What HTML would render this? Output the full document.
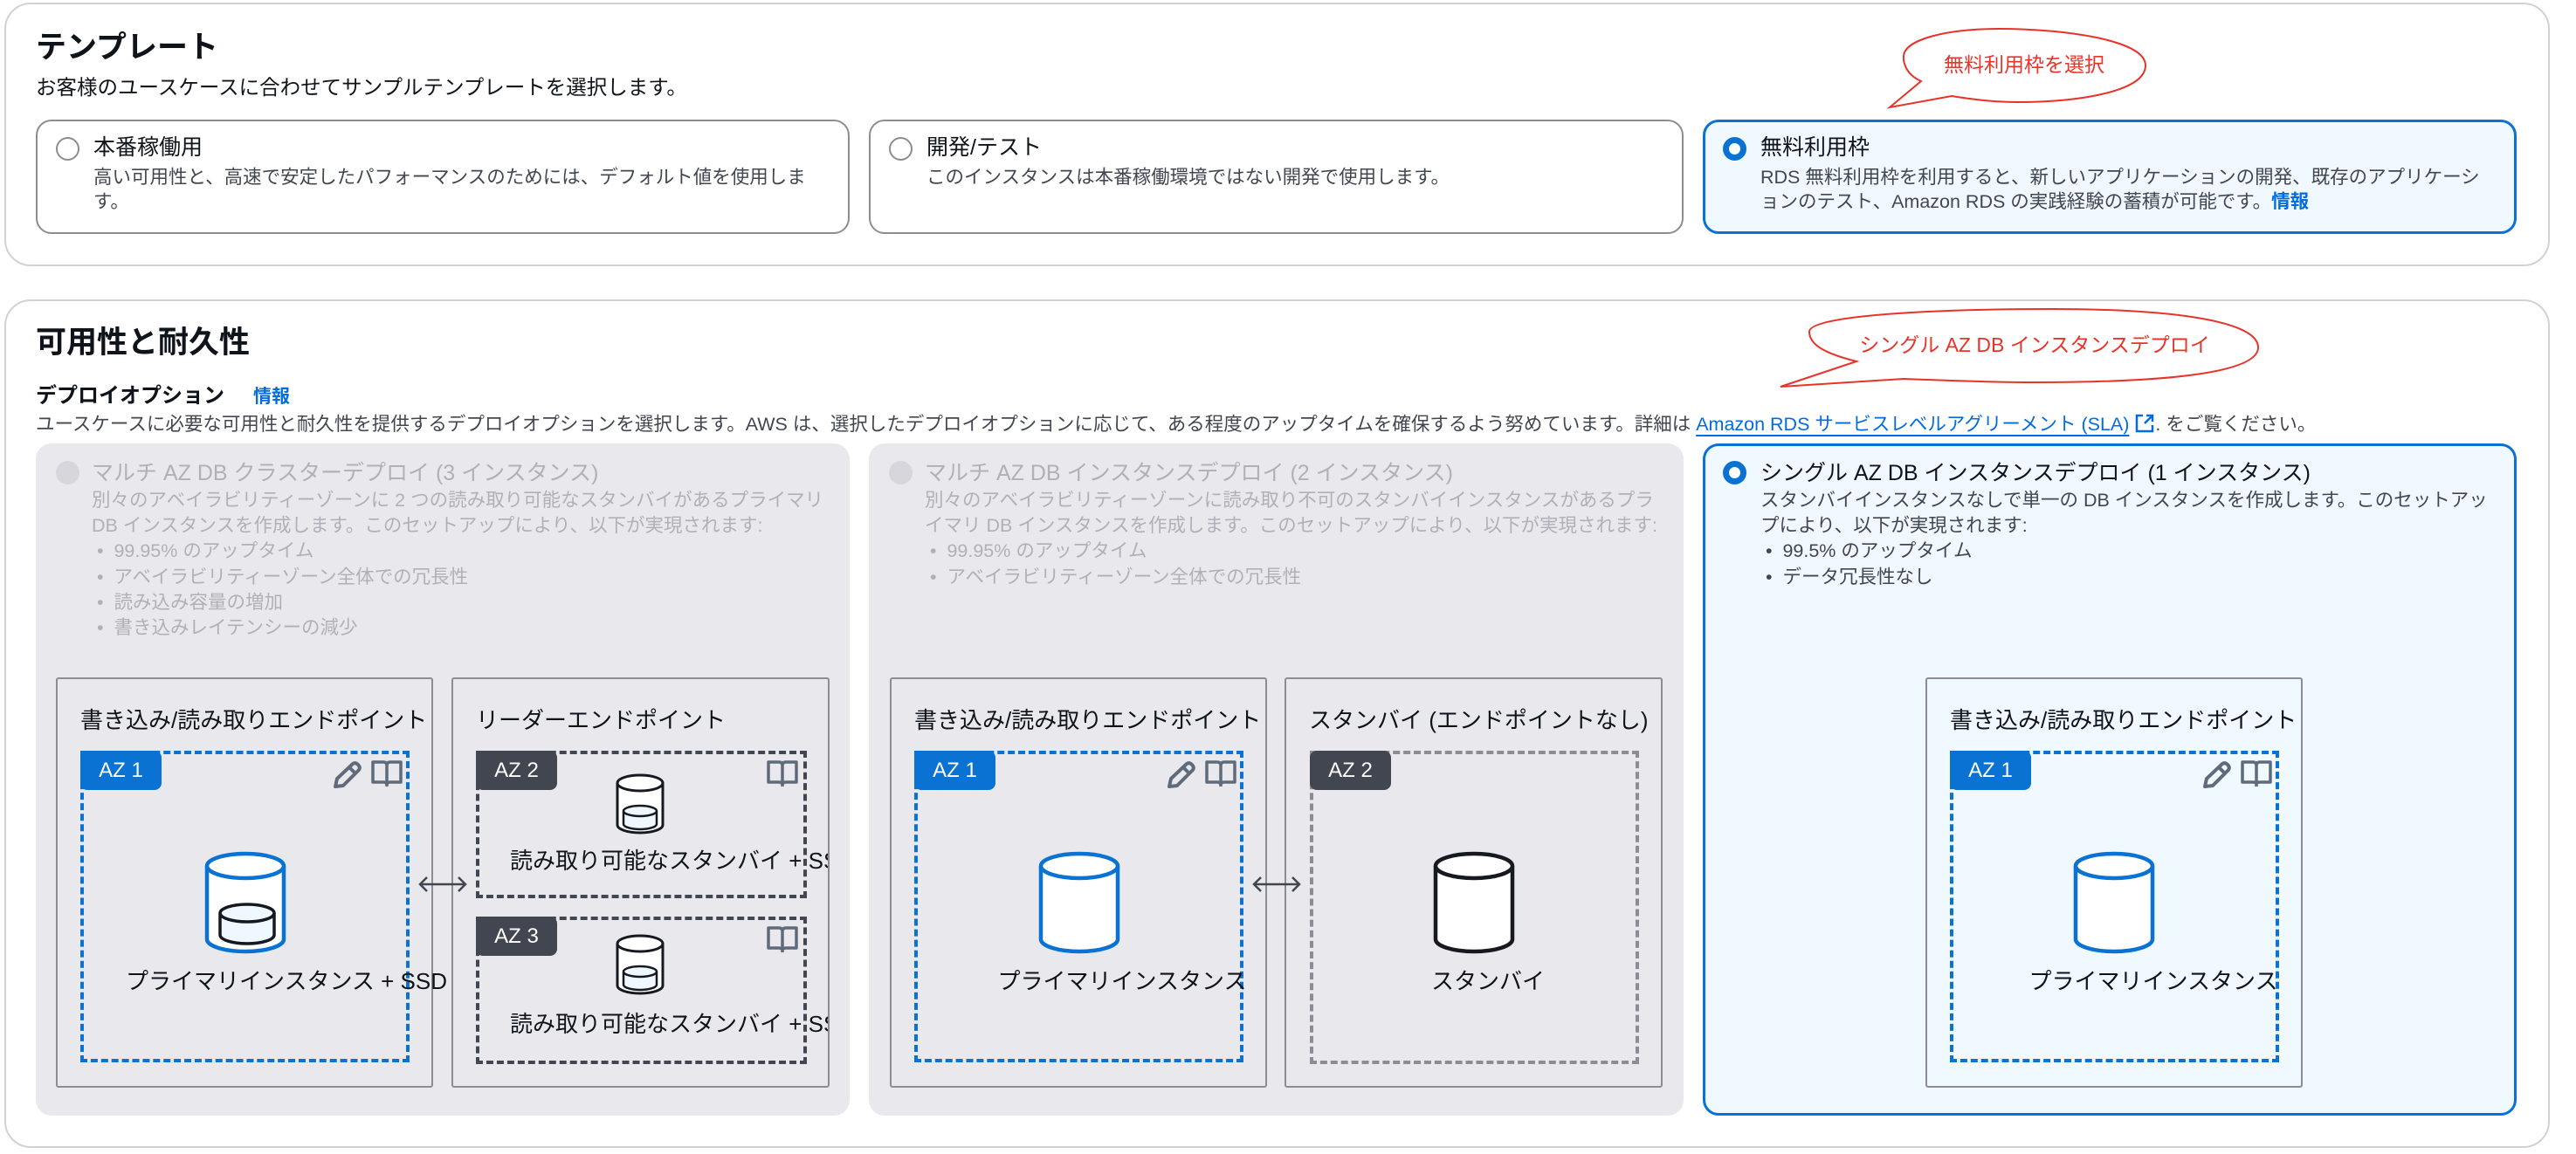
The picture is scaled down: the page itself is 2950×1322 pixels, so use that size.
<!DOCTYPE html>
<html><head><meta charset="utf-8"><style>
*{margin:0;padding:0;box-sizing:border-box}
body{width:2950px;height:1322px;background:#fff;position:relative;overflow:hidden;font-family:"Liberation Sans","Noto Sans CJK JP",sans-serif;color:#0f141a}
.a{position:absolute;white-space:nowrap}
.card{position:absolute;left:5px;width:2915px;border:2px solid #d1d1d8;border-radius:30px;background:#fff}
.opt{position:absolute;border:2px solid #8c8c94;border-radius:18px;background:#fff}
.sel{border:3px solid #0972d3;background:#f0f9ff}
.dis{border:none;background:#e9e9ed}
.radio{position:absolute;width:27px;height:27px;border-radius:50%;border:2px solid #8c8c94;background:#fff}
.radio.on{border:7px solid #0972d3}
.radio.off{border:none;background:#d6d6dc}
.t{font-size:25px;line-height:30px}
.d{font-size:21.5px;line-height:28px;color:#424650}
.g{color:#b0b0b8}
.box{position:absolute;border:2px solid #8c8c94;border-radius:3px;overflow:hidden}
.ep{position:absolute;font-size:26px;line-height:30px;top:32px;left:26px;white-space:nowrap}
.dash{position:absolute;border:4px dashed #0972d3}
.badge{position:absolute;left:-4px;top:-4px;width:93px;height:45px;border-radius:8px;background:#0972d3;color:#fff;font-size:24px;line-height:45px;text-align:center}
.lbl{position:absolute;font-size:26px;line-height:30px;white-space:nowrap;transform:translateX(-50%)}
.link{color:#006ce0}
</style></head><body>

<!-- Template card -->
<div class="card" style="top:3px;height:302px"></div>
<div class="a" style="left:41px;top:34px;font-size:35px;line-height:42px;font-weight:bold">テンプレート</div>
<div class="a" style="left:41px;top:86px;font-size:23.5px;line-height:28px">お客様のユースケースに合わせてサンプルテンプレートを選択します。</div>

<div class="opt" style="left:41px;top:137px;width:932px;height:131px">
 <div class="radio" style="left:21px;top:18px"></div>
 <div class="a t" style="left:64px;top:15px">本番稼働用</div>
 <div class="a d" style="left:64px;top:50px;color:#424650">高い可用性と、高速で安定したパフォーマンスのためには、デフォルト値を使用しま<br>す。</div>
</div>
<div class="opt" style="left:995px;top:137px;width:933px;height:131px">
 <div class="radio" style="left:21px;top:18px"></div>
 <div class="a t" style="left:64px;top:15px">開発/テスト</div>
 <div class="a d" style="left:64px;top:50px">このインスタンスは本番稼働環境ではない開発で使用します。</div>
</div>
<div class="opt sel" style="left:1950px;top:137px;width:932px;height:131px">
 <div class="radio on" style="left:20px;top:17px"></div>
 <div class="a t" style="left:63px;top:14px">無料利用枠</div>
 <div class="a d" style="left:63px;top:49px">RDS 無料利用枠を利用すると、新しいアプリケーションの開発、既存のアプリケーシ<br>ョンのテスト、Amazon RDS の実践経験の蓄積が可能です。<b class="link">情報</b></div>
</div>

<!-- balloon 1 -->
<svg class="a" style="left:2150px;top:25px" width="320" height="105" viewBox="0 0 320 105">
<path d="M14 98 L50 68 C28 58 30 40 30 40 C30 20 80 8 140 8 C210 8 307 20 307 50 C307 80 230 92 160 92 C130 92 105 88 85 85 Z" fill="#fff" stroke="#e8332a" stroke-width="2"/>
<text x="168" y="57" font-size="23" fill="#e8332a" text-anchor="middle" font-family="Liberation Sans, Noto Sans CJK JP, sans-serif">無料利用枠を選択</text>
</svg>

<!-- Availability card -->
<div class="card" style="top:343px;height:972px"></div>
<div class="a" style="left:41px;top:372px;font-size:35px;line-height:42px;font-weight:bold">可用性と耐久性</div>
<div class="a" style="left:41px;top:439px;font-size:24px;line-height:30px;font-weight:bold">デプロイオプション</div>
<div class="a link" style="left:290px;top:441px;font-size:21px;line-height:28px;font-weight:bold">情報</div>
<div class="a" style="left:41px;top:472px;font-size:21.5px;line-height:28px;color:#424650">ユースケースに必要な可用性と耐久性を提供するデプロイオプションを選択します。AWS は、選択したデプロイオプションに応じて、ある程度のアップタイムを確保するよう努めています。詳細は <span class="link" style="text-decoration:underline;text-underline-offset:5px;text-decoration-thickness:2px">Amazon RDS サービスレベルアグリーメント (SLA)</span> <svg width="24" height="24" viewBox="0 0 24 24" style="vertical-align:-4px"><path d="M10 3H3v18h18v-7M14 3h7v7M21 3l-9 9" fill="none" stroke="#006ce0" stroke-width="2.5"/></svg>. をご覧ください。</div>

<!-- balloon 2 -->
<svg class="a" style="left:2030px;top:350px" width="565" height="100" viewBox="0 0 565 100">
<path d="M9 93 L96 64 C60 55 42 45 42 30 C42 10 200 4 320 4 C460 4 556 18 556 48 C556 80 430 88 300 88 C250 88 200 86 150 84 Z" fill="#fff" stroke="#e8332a" stroke-width="2"/>
<text x="300" y="53" font-size="23" fill="#e8332a" text-anchor="middle" font-family="Liberation Sans, Noto Sans CJK JP, sans-serif">シングル AZ DB インスタンスデプロイ</text>
</svg>

<!-- Panel 1 -->
<div class="opt dis" style="left:41px;top:508px;width:932px;height:770px">
 <div class="radio off" style="left:23px;top:20px"></div>
 <div class="a t g" style="left:64px;top:19px">マルチ AZ DB クラスターデプロイ (3 インスタンス)</div>
 <div class="a d g" style="left:64px;top:51px;line-height:29.2px">別々のアベイラビリティーゾーンに 2 つの読み取り可能なスタンバイがあるプライマリ<br>DB インスタンスを作成します。このセットアップにより、以下が実現されます:<br>&nbsp;• &nbsp;99.95% のアップタイム<br>&nbsp;• &nbsp;アベイラビリティーゾーン全体での冗長性<br>&nbsp;• &nbsp;読み込み容量の増加<br>&nbsp;• &nbsp;書き込みレイテンシーの減少</div>
</div>
<div class="box" style="left:64px;top:776px;width:432px;height:470px;overflow:visible">
 <div class="ep">書き込み/読み取りエンドポイント</div>
</div>
<div class="box" style="left:517px;top:776px;width:433px;height:470px;background:transparent">
 <div class="ep">リーダーエンドポイント</div>
 <div class="dash" style="left:26px;top:82px;width:379px;height:169px;border-color:#424650"><div class="badge" style="background:#424650">AZ 2</div></div>
 <div class="lbl" style="left:216px;top:193px;transform:none;left:65px">読み取り可能なスタンバイ + SSD</div>
 <div class="dash" style="left:26px;top:272px;width:379px;height:169px;border-color:#424650"><div class="badge" style="background:#424650">AZ 3</div></div>
 <div class="lbl" style="left:65px;top:380px;transform:none">読み取り可能なスタンバイ + SSD</div>
</div>
<div class="dash" style="left:92px;top:860px;width:377px;height:357px"><div class="badge">AZ 1</div></div>
<div class="lbl" style="left:328px;top:1109px">プライマリインスタンス + SSD</div>

<!-- Panel 2 -->
<div class="opt dis" style="left:995px;top:508px;width:933px;height:770px">
 <div class="radio off" style="left:23px;top:20px"></div>
 <div class="a t g" style="left:64px;top:19px">マルチ AZ DB インスタンスデプロイ (2 インスタンス)</div>
 <div class="a d g" style="left:64px;top:51px;line-height:29.2px">別々のアベイラビリティーゾーンに読み取り不可のスタンバイインスタンスがあるプラ<br>イマリ DB インスタンスを作成します。このセットアップにより、以下が実現されます:<br>&nbsp;• &nbsp;99.95% のアップタイム<br>&nbsp;• &nbsp;アベイラビリティーゾーン全体での冗長性</div>
</div>
<div class="box" style="left:1019px;top:776px;width:432px;height:470px;overflow:visible">
 <div class="ep">書き込み/読み取りエンドポイント</div>
</div>
<div class="box" style="left:1471px;top:776px;width:433px;height:470px">
 <div class="ep">スタンバイ (エンドポイントなし)</div>
 <div class="dash" style="left:27px;top:82px;width:377px;height:359px;border-color:#8c8c94"><div class="badge" style="background:#424650">AZ 2</div></div>
</div>
<div class="dash" style="left:1047px;top:860px;width:377px;height:357px"><div class="badge">AZ 1</div></div>
<div class="lbl" style="left:1285px;top:1109px">プライマリインスタンス</div>
<div class="lbl" style="left:1704px;top:1109px">スタンバイ</div>

<!-- Panel 3 -->
<div class="opt sel" style="left:1950px;top:508px;width:932px;height:770px">
 <div class="radio on" style="left:20px;top:17px"></div>
 <div class="a t" style="left:63px;top:16px">シングル AZ DB インスタンスデプロイ (1 インスタンス)</div>
 <div class="a d" style="left:63px;top:48px;line-height:29.2px">スタンバイインスタンスなしで単一の DB インスタンスを作成します。このセットアッ<br>プにより、以下が実現されます:<br>&nbsp;• &nbsp;99.5% のアップタイム<br>&nbsp;• &nbsp;データ冗長性なし</div>
</div>
<div class="box" style="left:2205px;top:776px;width:432px;height:470px;overflow:visible">
 <div class="ep">書き込み/読み取りエンドポイント</div>
</div>
<div class="dash" style="left:2233px;top:860px;width:377px;height:357px"><div class="badge">AZ 1</div></div>
<div class="lbl" style="left:2466px;top:1109px">プライマリインスタンス</div>

<!-- Icons & cylinders -->
<svg class="a" style="left:0;top:0" width="2950" height="1322" viewBox="0 0 2950 1322">
<defs>
 <g id="pen"><path d="M4 29 L6 20 L24 3 Q27 1 30 4 Q33 7 31 10 L13 28 Z M20 7 L27 14" fill="none" stroke="#5f6b7a" stroke-width="4" stroke-linejoin="round"/></g>
 <g id="book"><path d="M2 2 H14 Q18 2 18 6 V28 Q18 25 14 25 H2 Z M34 2 H22 Q18 2 18 6 V28 Q18 25 22 25 H34 Z M18 25 V30" fill="none" stroke="#5f6b7a" stroke-width="3.5" stroke-linejoin="round"/></g>
 <g id="cylB"><path d="M-44 -42 V42 A44 14 0 0 0 44 42 V-42" fill="#fff" stroke="#0972d3" stroke-width="4.5"/><ellipse cx="0" cy="-42" rx="44" ry="14" fill="#fff" stroke="#0972d3" stroke-width="4.5"/></g>
 <g id="ssd"><path d="M-31 12 V37 A31 10 0 0 0 31 37 V12" fill="#f0f8ff" stroke="#16191f" stroke-width="3.5"/><ellipse cx="0" cy="12" rx="31" ry="10" fill="#f0f8ff" stroke="#16191f" stroke-width="3.5"/></g>
 <g id="cylS"><path d="M-26 -24 V24 A26 9 0 0 0 26 24 V-24" fill="#fff" stroke="#16191f" stroke-width="3"/><ellipse cx="0" cy="-24" rx="26" ry="9" fill="#fff" stroke="#16191f" stroke-width="3"/><path d="M-19 8 V23 A19 6 0 0 0 19 23 V8" fill="#f0f8ff" stroke="#16191f" stroke-width="2.5"/><ellipse cx="0" cy="8" rx="19" ry="6" fill="#f0f8ff" stroke="#16191f" stroke-width="2.5"/></g>
 <g id="arr"><path d="M3 0 H55 M11 -8 L3 0 L11 8 M47 -8 L55 0 L47 8" fill="none" stroke="#424650" stroke-width="2.5"/></g>
</defs>
<use href="#pen" x="380" y="872"/><use href="#book" x="425" y="871"/>
<use href="#pen" x="1335" y="872"/><use href="#book" x="1380" y="871"/>
<use href="#pen" x="2521" y="872"/><use href="#book" x="2566" y="871"/>
<use href="#book" x="878" y="871"/><use href="#book" x="878" y="1061"/>
<use href="#cylB" x="281" y="1034"/><use href="#ssd" x="283" y="1034"/>
<use href="#cylB" x="1236" y="1034"/>
<use href="#cylB" x="2421" y="1034"/>
<g transform="translate(1688 1034)"><path d="M-44 -42 V42 A44 14 0 0 0 44 42 V-42" fill="#fff" stroke="#16191f" stroke-width="4.5"/><ellipse cx="0" cy="-42" rx="44" ry="14" fill="#fff" stroke="#16191f" stroke-width="4.5"/></g>
<use href="#cylS" x="733" y="921"/>
<use href="#cylS" x="733" y="1105"/>
<use href="#arr" x="478" y="1013"/>
<use href="#arr" x="1433" y="1013"/>
</svg>
</body></html>
